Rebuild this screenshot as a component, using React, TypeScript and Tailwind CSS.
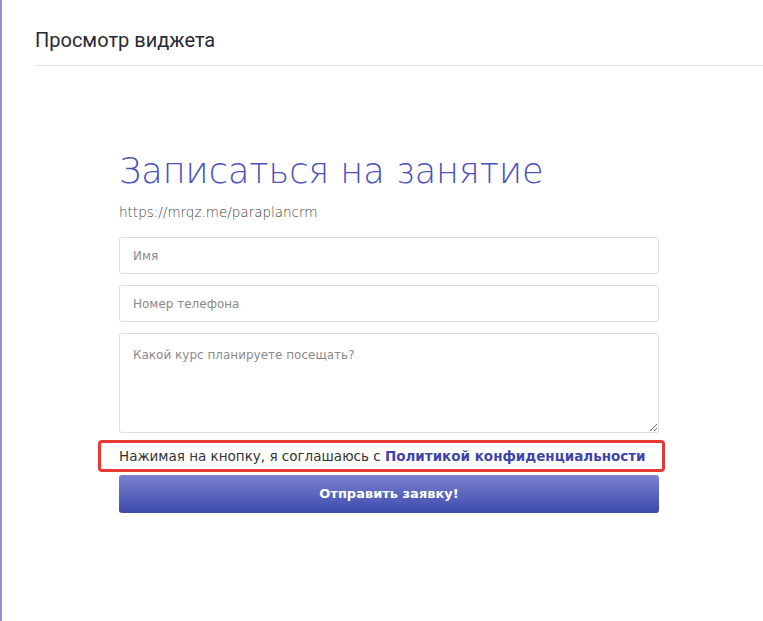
import { useState } from "react";

const App = () => {
  const [name, setName] = useState("");
  const [phone, setPhone] = useState("");
  const [course, setCourse] = useState("");

  const inputCls =
    "w-full h-[37px] rounded-[3px] border border-[#dcdcdc] bg-white px-[13px] text-[12px] text-[#333] placeholder:text-[#8a8a8a] outline-none";

  return (
    <div className="min-h-[621px] w-full bg-white border-l-2 border-[#9193c6] font-['DejaVu_Sans',sans-serif]">
      {/* Header */}
      <div className="pl-[33px] pt-[28px]">
        <h1 className="pb-[12px] border-b border-[#e0e0e0] font-['Roboto',sans-serif] text-[20px] leading-[25px] text-[#2a2a35]">
          Просмотр виджета
        </h1>
      </div>

      {/* Widget */}
      <div className="w-[540px] ml-[117px] pt-[83px]">
        <h2 className="text-[35px] leading-[44px] font-extralight text-[#4b52b8]">
          Записаться на занятие
        </h2>
        <p className="mt-[9px] text-[13.5px] leading-[20px] font-extralight text-[#444]">
          https://mrqz.me/paraplancrm
        </p>

        <div className="mt-[15px] flex flex-col gap-[11px]">
          <input
            className={inputCls}
            placeholder="Имя"
            value={name}
            onChange={(e) => setName(e.target.value)}
          />
          <input
            className={inputCls}
            placeholder="Номер телефона"
            value={phone}
            onChange={(e) => setPhone(e.target.value)}
          />
          <textarea
            className="w-full h-[100px] rounded-[3px] border border-[#dcdcdc] bg-white px-[13px] py-[12px] text-[12px] text-[#333] placeholder:text-[#8a8a8a] outline-none"
            placeholder="Какой курс планируете посещать?"
            value={course}
            onChange={(e) => setCourse(e.target.value)}
          />
        </div>

        {/* Consent */}
        <div className="mt-[7px] -ml-[21px] w-fit rounded-[4px] border-[3px] border-[#e53935] pl-[18px] pr-[16px] py-[3px]">
          <p className="text-[13.5px] leading-[20px] text-[#333] whitespace-nowrap">
            Нажимая на кнопку, я соглашаюсь с{" "}
            <a href="#" className="font-bold text-[#3f45a8]">
              Политикой конфиденциальности
            </a>
          </p>
        </div>

        <button className="mt-[3px] w-full h-[38px] rounded-[3px] bg-gradient-to-b from-[#7b82cf] to-[#3e49ad] text-[13px] font-bold text-white">
          Отправить заявку!
        </button>
      </div>
    </div>
  );
};

export default App;
